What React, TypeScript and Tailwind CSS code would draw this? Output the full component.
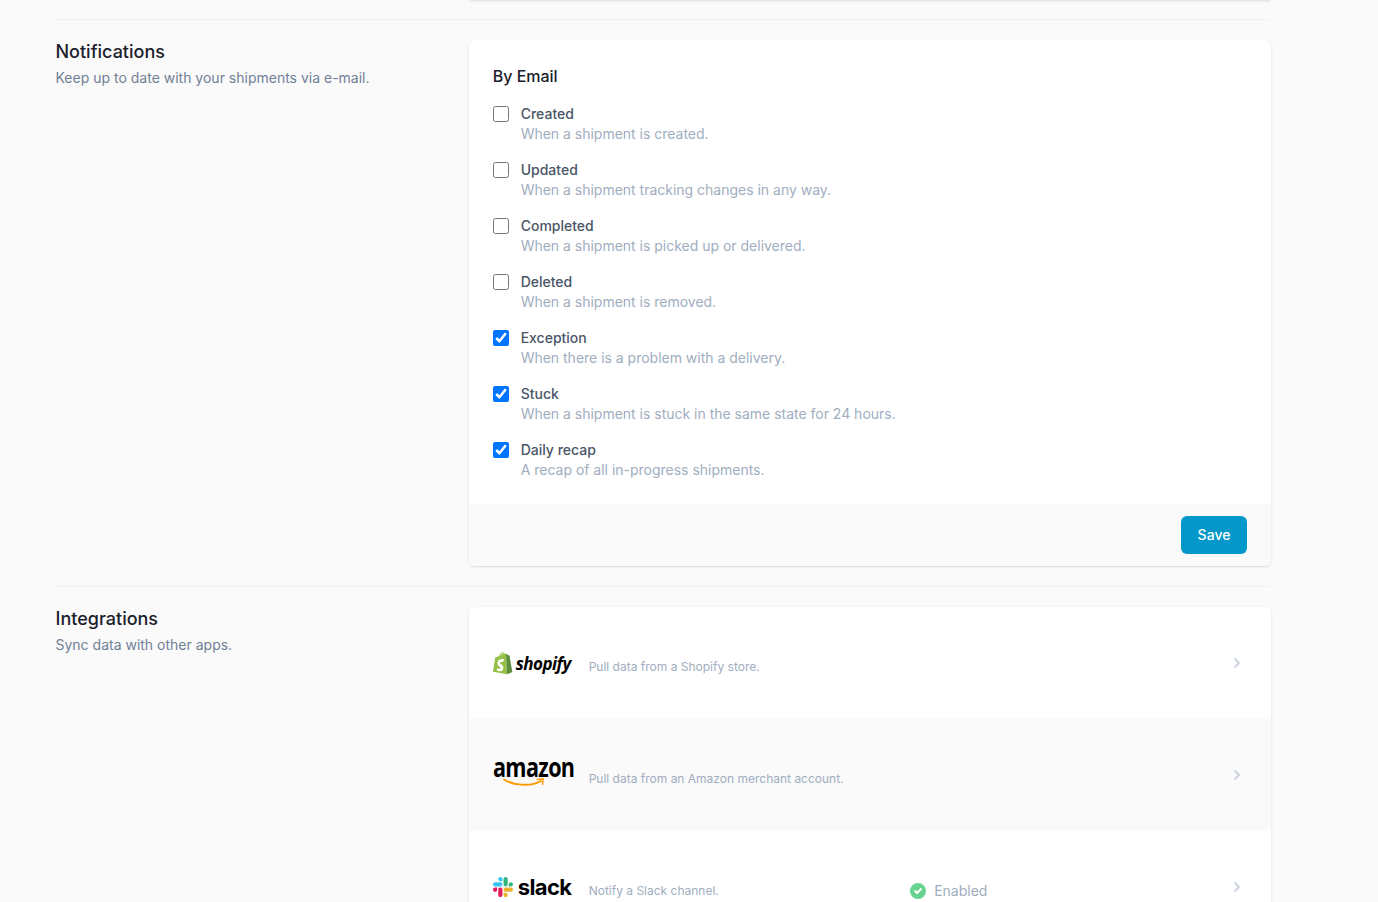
const SANS = "font-['Inter','Noto_Sans',sans-serif]";

const OPCOES = [
  { titulo: "Created", desc: "When a shipment is created.", marcado: false },
  { titulo: "Updated", desc: "When a shipment tracking changes in any way.", marcado: false },
  { titulo: "Completed", desc: "When a shipment is picked up or delivered.", marcado: false },
  { titulo: "Deleted", desc: "When a shipment is removed.", marcado: false },
  { titulo: "Exception", desc: "When there is a problem with a delivery.", marcado: true },
  { titulo: "Stuck", desc: "When a shipment is stuck in the same state for 24 hours.", marcado: true },
  { titulo: "Daily recap", desc: "A recap of all in-progress shipments.", marcado: true },
];

function ShopifyLogo() {
  return (
    <div className="flex h-6 w-20 items-center">
      <svg width="21" height="23" viewBox="0 0 21 23" className="-ml-px shrink-0">
        <path d="M1 19.8 3.2 5.6C4.6 5 6 4.6 7 4.2 7.8 2 9.2.6 10.6.6c1 0 1.6.5 2 1.3l1.3-.3 1.2 20.7L1 19.8Z" fill="#95bf47" />
        <path d="M13.9 1.6c.3 0 1.4 1 1.6 1.4l1.7.2.3.3L20.3 20l-5.2 2.3L13.9 1.6Z" fill="#5e8e3e" />
        <path d="M11.6 8.2 11 10.3c-.5-.3-1.2-.5-1.9-.4-1.3.1-1.3 1-1.3 1.2.1 1.2 3.4 1.5 3.6 4.4.1 2.2-1.3 3.7-3.2 3.8-2.3.1-3.5-1.3-3.5-1.3l.5-2s1.3.9 2.3.9c.7 0 .9-.6.9-.9-.1-1.6-2.8-1.5-3-4.2-.1-2.2 1.3-4.5 4.5-4.7 1.7-.1 2.7.4 2.7.4Z" fill="#fff" />
        <path d="M8.5 3.8c.4-1.2 1.2-2.2 2.1-2.3M11 3.2c0-.6-.1-1.2-.3-1.6" fill="none" stroke="#fff" strokeWidth=".6" />
      </svg>
      <span className="ml-[3px] font-['Open_Sans',sans-serif] text-[17px] font-bold italic leading-none tracking-[-0.5px] text-black">
        shopify
      </span>
    </div>
  );
}

function AmazonLogo() {
  return (
    <div className="relative h-7 w-20">
      <span className="absolute left-0 top-[-10px] origin-left font-['Open_Sans',sans-serif] text-[26px] font-bold leading-8 tracking-[-0.8px] text-black [transform:scaleX(0.83)]">
        amazon
      </span>
      <svg width="46" height="11" viewBox="0 0 46 11" className="absolute left-[10px] top-[17px]">
        <path d="M1 1.5C9 6.8 27 9.5 38 3" fill="none" stroke="#f90" strokeWidth="1.9" strokeLinecap="round" />
        <path d="M33.5 1.6 40.2.8 39.4 7" fill="none" stroke="#f90" strokeWidth="1.4" strokeLinejoin="round" />
      </svg>
    </div>
  );
}

function SlackLogo() {
  return (
    <div className="flex h-6 w-20 items-center">
      <svg width="20" height="20" viewBox="0 0 122.8 122.8" className="shrink-0">
        <path d="M25.8 77.6c0 7.1-5.8 12.9-12.9 12.9S0 84.7 0 77.6s5.8-12.9 12.9-12.9h12.9v12.9zm6.5 0c0-7.1 5.8-12.9 12.9-12.9s12.9 5.8 12.9 12.9v32.3c0 7.1-5.8 12.9-12.9 12.9s-12.9-5.8-12.9-12.9V77.6z" fill="#e01e5a" />
        <path d="M45.2 25.8c-7.1 0-12.9-5.8-12.9-12.9S38.1 0 45.2 0s12.9 5.8 12.9 12.9v12.9H45.2zm0 6.5c7.1 0 12.9 5.8 12.9 12.9s-5.8 12.9-12.9 12.9H12.9C5.8 58.1 0 52.3 0 45.2s5.8-12.9 12.9-12.9h32.3z" fill="#36c5f0" />
        <path d="M97 45.2c0-7.1 5.8-12.9 12.9-12.9s12.9 5.8 12.9 12.9-5.8 12.9-12.9 12.9H97V45.2zm-6.5 0c0 7.1-5.8 12.9-12.9 12.9s-12.9-5.8-12.9-12.9V12.9C64.7 5.8 70.5 0 77.6 0s12.9 5.8 12.9 12.9v32.3z" fill="#2eb67d" />
        <path d="M77.6 97c7.1 0 12.9 5.8 12.9 12.9s-5.8 12.9-12.9 12.9-12.9-5.8-12.9-12.9V97h12.9zm0-6.5c-7.1 0-12.9-5.8-12.9-12.9s5.8-12.9 12.9-12.9h32.3c7.1 0 12.9 5.8 12.9 12.9s-5.8 12.9-12.9 12.9H77.6z" fill="#ecb22e" />
      </svg>
      <span className="ml-[5px] font-['Inter',sans-serif] text-[22px] font-bold leading-none tracking-[-0.6px] text-black">
        slack
      </span>
    </div>
  );
}

function LinhaIntegracao({
  logo,
  texto,
  fundo,
  ativo,
}: {
  logo: React.ReactNode;
  texto: string;
  fundo?: boolean;
  ativo?: boolean;
}) {
  return (
    <div className={`flex h-28 shrink-0 items-center pl-6 pr-6 ${fundo ? "bg-[#fafafa]" : "bg-white"}`}>
      <div className="w-20 shrink-0">{logo}</div>
      <div className="ml-4 grid flex-1 grid-cols-[319.5px_1fr] items-center">
        <p className="mt-2 text-xs leading-4 text-[#a0aec0]">{texto}</p>
        {ativo && (
          <div className="mt-2 flex items-center text-sm leading-5 text-[#a0aec0]">
            <svg width="20" height="20" viewBox="0 0 20 20" fill="#68d391" className="mr-1.5 shrink-0">
              <path
                fillRule="evenodd"
                clipRule="evenodd"
                d="M10 18a8 8 0 1 0 0-16 8 8 0 0 0 0 16Zm3.7-9.3a1 1 0 0 0-1.4-1.4L9 10.6 7.7 9.3a1 1 0 0 0-1.4 1.4l2 2a1 1 0 0 0 1.4 0l4-4Z"
              />
            </svg>
            Enabled
          </div>
        )}
      </div>
      <svg width="20" height="20" viewBox="0 0 20 20" fill="#cbd5e0" className="shrink-0">
        <path
          fillRule="evenodd"
          clipRule="evenodd"
          d="M7.293 14.707a1 1 0 0 1 0-1.414L10.586 10 7.293 6.707a1 1 0 0 1 1.414-1.414l4 4a1 1 0 0 1 0 1.414l-4 4a1 1 0 0 1-1.414 0Z"
        />
      </svg>
    </div>
  );
}

export default function App() {
  return (
    <div className={`h-[902px] overflow-hidden bg-[#fafafa] ${SANS}`}>
      <div className="ml-[55.5px] w-[1215.5px]">
        <div className="absolute left-[469px] top-[-4px] h-1 w-[802px] rounded-md bg-white shadow" />
        <div className="pt-[19px]">
          <div className="border-t border-[#edf2f7]" />
        </div>

        <section className="grid grid-cols-3 gap-6 pt-5">
          <div>
            <h3 className="text-lg font-medium leading-6 text-[#1a202c]">Notifications</h3>
            <p className="mt-1 text-sm leading-5 text-[#718096]">Keep up to date with your shipments via e-mail.</p>
          </div>
          <div className="col-span-2 overflow-hidden rounded-md bg-white shadow">
            <div className="p-6">
              <h4 className="text-base font-medium leading-6 text-[#1a202c]">By Email</h4>
              <div className="mt-4 flex flex-col gap-4">
                {OPCOES.map((o) => (
                  <label key={o.titulo} className="flex items-start">
                    <input type="checkbox" defaultChecked={o.marcado} className="mt-0.5 h-4 w-4 shrink-0" />
                    <div className="ml-3 text-sm leading-5">
                      <div className="font-medium text-[#4a5568]">{o.titulo}</div>
                      <div className="tracking-[-0.01px] text-[#a0aec0]">{o.desc}</div>
                    </div>
                  </label>
                ))}
              </div>
            </div>
            <div className="flex justify-end bg-[#fafafa] px-6 py-3">
              <button className="h-[38px] w-[66px] rounded-md bg-[#0398c9] text-sm font-medium text-white">Save</button>
            </div>
          </div>
        </section>

        <div className="pt-5">
          <div className="border-t border-[#edf2f7]" />
        </div>

        <section className="grid grid-cols-3 gap-6 pt-5">
          <div>
            <h3 className="text-lg font-medium leading-6 text-[#1a202c]">Integrations</h3>
            <p className="mt-1 text-sm leading-5 text-[#718096]">Sync data with other apps.</p>
          </div>
          <div className="col-span-2 flex flex-col overflow-hidden rounded-md bg-white shadow">
            <LinhaIntegracao logo={<ShopifyLogo />} texto="Pull data from a Shopify store." />
            <LinhaIntegracao logo={<AmazonLogo />} texto="Pull data from an Amazon merchant account." fundo />
            <LinhaIntegracao logo={<SlackLogo />} texto="Notify a Slack channel." ativo />
          </div>
        </section>
      </div>
    </div>
  );
}
